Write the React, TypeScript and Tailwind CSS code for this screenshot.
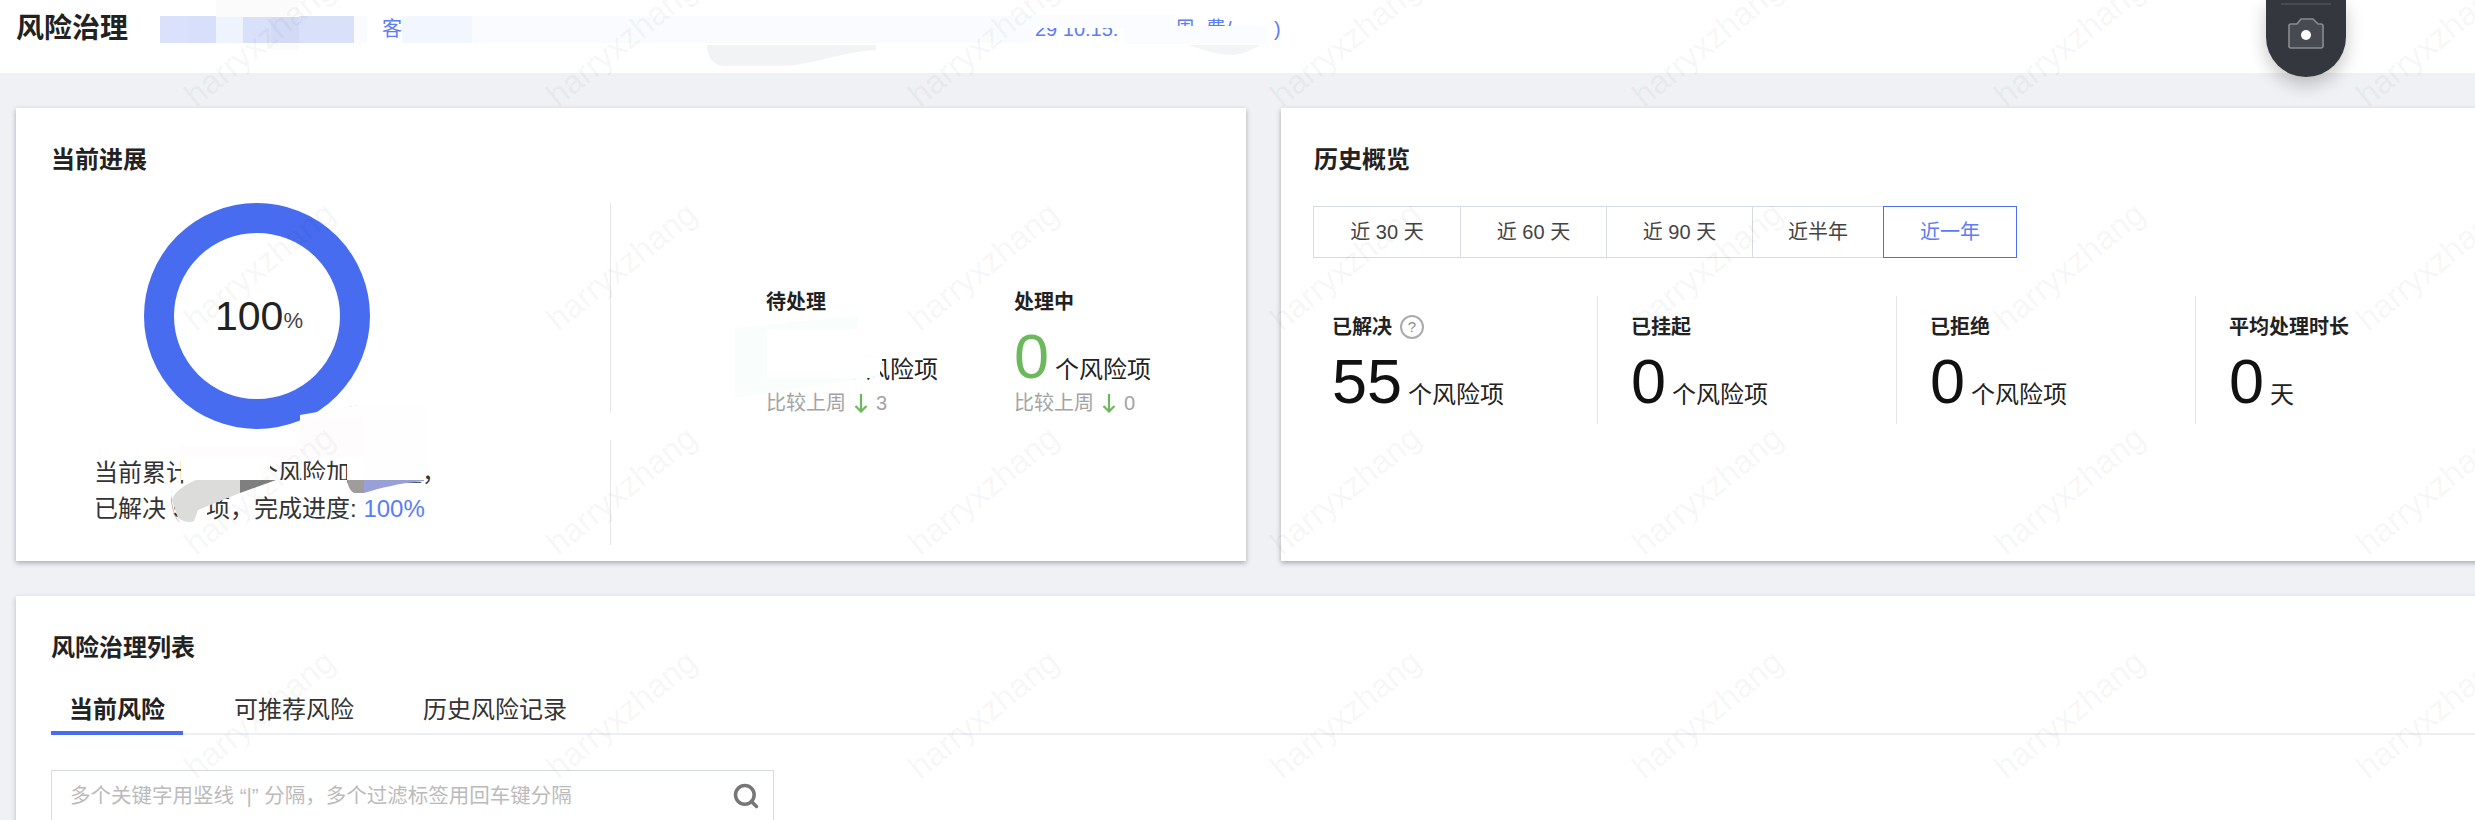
import React from 'react';
import { Search } from 'lucide-react';

const BLUE = '#4a6ef2';

// tile of the watermark: lower-left corner of each text
const marks: { x: number; y: number }[] = [];
for (let r = 0; r < 5; r++) {
  for (let c = 0; c < 7; c++) {
    marks.push({ x: 196 + 362 * c, y: 108 + 224 * r });
  }
}

const Stat = ({ num, unit, color }: { num: string; unit: string; color?: string }) => (
  <div className="flex items-baseline mt-[10px]">
    <span className={`text-[63px] leading-[60px] ${color || 'text-[#111111]'}`}>{num}</span>
    <span className="ml-[6px] text-[24px] leading-[30px] text-[#222222]">{unit}</span>
  </div>
);

const Compare = ({ value }: { value: string }) => (
  <div className="flex items-center mt-[3px] h-[28px] text-[20px] text-[#a3a3a3]">
    <span>比较上周</span>
    <svg width="14" height="20" viewBox="0 0 14 20" className="ml-[8px]" fill="none" stroke="#6cb85c" strokeWidth="2.2">
      <path d="M7 1V18.5M1.5 13L7 18.5L12.5 13" />
    </svg>
    <span className="ml-[8px]">{value}</span>
  </div>
);

const ranges = [
  { label: '近 30 天', w: 'w-[148px]' },
  { label: '近 60 天', w: 'w-[147px]' },
  { label: '近 90 天', w: 'w-[147px]' },
  { label: '近半年', w: 'w-[132px]' },
];

function CurrentCard() {
  return (
    <div className="w-[1230px] h-[453px] shrink-0 bg-white shadow-[0_2px_5px_rgba(60,60,80,0.4)] pt-9 pl-[35px]">
      <h3 className="text-[24px] leading-8 font-bold text-[#222222]">当前进展</h3>
      <div className="flex mt-[27px]">
        <div className="w-[559px] shrink-0">
          <div className="ml-[93px] w-[226px] h-[226px] pl-1 rounded-full border-[30px] border-[#486cf0] flex items-center justify-center">
            <span className="text-[41px] leading-none text-[#222222]">100</span>
            <span className="text-[22px] leading-none mt-[10px] text-[#444444]">%</span>
          </div>
          <div className="ml-[43px] mt-[26px] text-[24px] leading-[36px] text-[#333333]">
            <p>当前累计有 55 个风险加入治理，</p>
            <p>
              已解决 55 项，完成进度: <span className="text-[#5a7cf5]">100%</span>
            </p>
          </div>
        </div>
        <div className="w-px h-[342px] bg-[#e6e6e6]" />
        <div className="pl-[155px] pt-[85px] flex">
          <div className="w-[248px]">
            <div className="text-[20px] leading-7 font-bold text-[#222222]">待处理</div>
            <Stat num="55" unit="个风险项" color="text-[#6cb85c]" />
            <Compare value="3" />
          </div>
          <div>
            <div className="text-[20px] leading-7 font-bold text-[#222222]">处理中</div>
            <Stat num="0" unit="个风险项" color="text-[#6cb85c]" />
            <Compare value="0" />
          </div>
        </div>
      </div>
    </div>
  );
}

function HistoryCard() {
  return (
    <div className="w-[1300px] h-[453px] shrink-0 bg-white shadow-[0_2px_5px_rgba(60,60,80,0.4)] pt-9 pl-8">
      <h3 className="ml-px text-[24px] leading-8 font-bold text-[#222222]">历史概览</h3>
      <div className="flex mt-[30px] pl-px">
        {ranges.map((r) => (
          <div
            key={r.label}
            className={`${r.w} -ml-px h-[52px] border border-[#d9dbe2] flex items-center justify-center text-[20px] text-[#444444]`}
          >
            {r.label}
          </div>
        ))}
        <div className="w-[134px] -ml-px h-[52px] border-[1.5px] flex items-center justify-center text-[20px] text-[#5a7cf5]" style={{ borderColor: BLUE }}>
          近一年
        </div>
      </div>
      <div className="flex mt-[38px] h-[128px]">
        <div className="w-[284px] pl-[19px] pt-[17px]">
          <div className="flex items-center text-[20px] leading-7 font-bold text-[#222222]">
            已解决
            <span className="ml-[8px] w-6 h-6 rounded-full border-2 border-[#ababab] flex items-center justify-center text-[15px] font-normal text-[#8c8c8c]">?</span>
          </div>
          <Stat num="55" unit="个风险项" />
        </div>
        <div className="w-[299px] border-l border-[#e6e6e6] pl-[33px] pt-[17px]">
          <div className="text-[20px] leading-7 font-bold text-[#222222]">已挂起</div>
          <Stat num="0" unit="个风险项" />
        </div>
        <div className="w-[299px] border-l border-[#e6e6e6] pl-[33px] pt-[17px]">
          <div className="text-[20px] leading-7 font-bold text-[#222222]">已拒绝</div>
          <Stat num="0" unit="个风险项" />
        </div>
        <div className="w-[299px] border-l border-[#e6e6e6] pl-[33px] pt-[17px]">
          <div className="text-[20px] leading-7 font-bold text-[#222222]">平均处理时长</div>
          <Stat num="0" unit="天" />
        </div>
      </div>
    </div>
  );
}

function ListCard() {
  return (
    <div className="w-[2600px] shrink-0 h-[300px] mt-[35px] bg-white shadow-[0_2px_5px_rgba(60,60,80,0.3)] pt-9 pl-[35px]">
      <h3 className="text-[24px] leading-8 font-bold text-[#222222]">风险治理列表</h3>
      <div className="flex gap-[33px] mt-[30px] border-b-2 border-[#eeeff2] text-[24px] leading-8">
        <div className="relative px-[18px] pb-[7px] font-bold text-[#222222]">
          当前风险
          <div className="absolute left-0 right-0 -bottom-[2px] h-[4px] bg-[#486cf0]" />
        </div>
        <div className="px-[18px] pb-[7px] text-[#333333]">可推荐风险</div>
        <div className="px-[18px] pb-[7px] text-[#333333]">历史风险记录</div>
      </div>
      <div className="mt-[35px] w-[723px] h-[52px] border border-[#d9dbe2] flex items-center pl-[18px] pr-[13px]">
        <input
          readOnly
          className="flex-1 text-[20.5px] outline-none placeholder-[#bbbbbb]"
          placeholder="多个关键字用竖线 “|” 分隔，多个过滤标签用回车键分隔"
        />
        <Search size={28} strokeWidth={3} color="#777777" />
      </div>
    </div>
  );
}

export default function App() {
  return (
    <div className="relative w-[2475px] h-[820px] overflow-hidden bg-[#f0f1f5] font-['Liberation_Sans','Noto_Sans_CJK_SC',sans-serif]">
      <header className="relative h-[73px] bg-white flex items-center pl-4 pb-[15px] whitespace-nowrap">
        <h1 className="w-[144px] shrink-0 text-[28px] font-bold text-[#222222] leading-none">风险治理</h1>
        <div className="flex h-[27px] shrink-0">
          <div className="w-[28px] bg-[#d9e1fb]" />
          <div className="w-[28px] bg-[#d7dffa]" />
          <div className="w-[27px] bg-[#eff3fd]" />
          <div className="w-[28px] bg-[#d8e0fa]" />
          <div className="w-[28px] bg-[#d3daf5]" />
          <div className="w-[55px] bg-[#d8e0fa]" />
          <div className="w-[13px] bg-[#fafbfe]" />
        </div>
        <span className="ml-[15px] text-[20px] leading-none text-[#5a7cf5]">客</span>
        <div className="flex h-[27px] shrink-0">
          <div className="w-[70px] bg-[#f2f6fe]" />
          <div className="w-[560px] bg-[#f9fbff]" />
        </div>
        <span className="ml-[3px] w-[90px] shrink-0 text-[20px] leading-none text-[#5a7cf5]">29 10:15:</span>
        <div className="w-[50px] h-[27px] bg-[#fafbff] shrink-0" />
        <span className="w-[99px] shrink-0 text-[20px] leading-none text-[#5a7cf5]">周_费/</span>
        <span className="text-[20px] leading-none text-[#5a7cf5]">)</span>
        <div className="absolute top-0 left-[2266px] w-[80px] h-[77px] rounded-b-[40px] bg-[#35373f] shadow-[0_8px_18px_rgba(0,0,0,0.22)] z-10">
          <div className="mx-auto mt-[3px] w-[50px] h-[2px] bg-[#474a52]" />
          <svg width="36" height="32" viewBox="0 0 36 32" className="mx-auto mt-[12px]" fill="#484a52" stroke="#8b8c91" strokeWidth="1.6" strokeLinejoin="round">
            <path d="M3 7H9L13 2H25L30 7H33C34 7 35 8 35 9V29C35 30 34 31 33 31H3C2 31 1 30 1 29V9C1 8 2 7 3 7Z" />
            <circle cx="18" cy="18" r="5" fill="#ffffff" stroke="none" />
          </svg>
        </div>
      </header>

      <main className="pl-4 pt-[35px]">
        <div className="flex gap-[35px]">
          <CurrentCard />
          <HistoryCard />
        </div>
        <ListCard />
      </main>

      {/* smudges over the hidden values */}
      <svg className="absolute inset-0 pointer-events-none" width="2475" height="820" viewBox="0 0 2475 820">
        {/* header */}
        <path d="M1020 14H1175V44H1124V28H1020Z" fill="#fbfcff" />
        <path d="M1172 26H1266V44H1172Z" fill="#fbfcff" />
        <path d="M707 45H876V50C840 52 810 66 780 66H725C712 66 707 55 707 45Z" fill="#f2f3f4" />
        <path d="M1188 45H1262L1250 50C1240 56 1225 56 1210 52Z" fill="#f3f4f5" />
        <path d="M216 0H299V17H216ZM270 44H299V50H270Z" fill="#fbfbfb" />
        {/* donut note */}
        <path d="M316.7 417.7C330 411 347 406 364 405V417.7Z" fill="#3f62de" />
        <path d="M364 404H426V482H364V418H300V415Z" fill="#fefefe" />
        <path d="M300 418H364V458H180V445H300Z" fill="#fefcfd" />
        <path d="M181 456H270V480H181Z" fill="#ffffff" />
        <path d="M347 456H364V480H347Z" fill="#ffffff" />
        <path d="M270 480H347V490H270Z" fill="#ffffff" />
        <path d="M240 480H276L240 493Z" fill="#7f7f7f" />
        <path d="M195 495H207V523H195Z" fill="#ffffff" />
        <path d="M240 480V493L198 510L194 521C190 523 184 522 178 518L172 500C174 492 184 485 196 480Z" fill="#dcdcda" />
        <path d="M172 488C170 500 174 518 180 522C176 521 172 510 171 500Z" fill="#989694" />
        <path d="M347 480H364V493H354C350 491 348 486 347 480Z" fill="#a09c9c" />
        <path d="M364 480H424V481C400 483 380 488 364 493Z" fill="#98a0d6" />
        {/* left divider gap */}
        <path d="M604 412H616V440H604Z" fill="#ffffff" />
        {/* pending value */}
        <path d="M735 328L858 315V356L880 357V376L735 398Z" fill="#f9fefc" />
        <path d="M767 330H858V356L882 358V370L870 378H767Z" fill="#ffffff" />
      </svg>

      {/* watermark */}
      <svg className="absolute inset-0 pointer-events-none" width="2475" height="820" viewBox="0 0 2475 820">
        {marks.map((m) => (
          <text
            key={`${m.x}-${m.y}`}
            x={m.x}
            y={m.y}
            transform={`rotate(-39 ${m.x} ${m.y})`}
            fontSize="33"
            fill="rgba(0,0,0,0.055)"
          >
            harryxzhang
          </text>
        ))}
      </svg>
    </div>
  );
}
